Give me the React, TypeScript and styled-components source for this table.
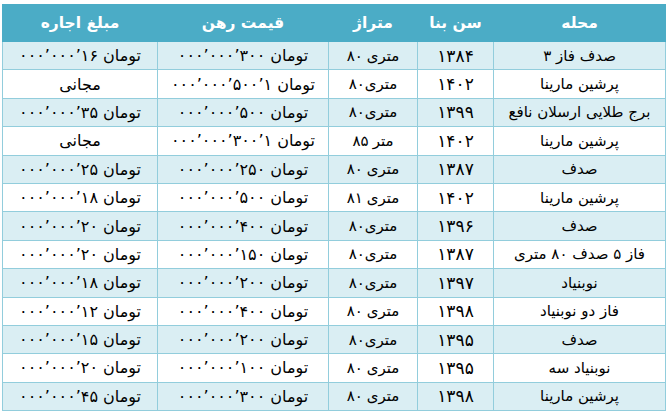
import styled, { createGlobalStyle } from "styled-components";

const GlobalStyle = createGlobalStyle`
  html, body {
    margin: 0;
    padding: 0;
    background: #ffffff;
  }
  body {
    font-family: "DejaVu Sans", "Noto Sans", sans-serif;
  }
`;

interface Listing {
  area: string;
  year: string;
  meters: string;
  spaced: boolean;
  unit: string;
  deposit: string[] | null;
  rent: string[] | null;
}

const listings: Listing[] = [
  { area: "صدف فاز ۳", year: "۱۳۸۴", meters: "۸۰", spaced: true, unit: "متری", deposit: ["۳۰۰", "۰۰۰", "۰۰۰"], rent: ["۱۶", "۰۰۰", "۰۰۰"] },
  { area: "پرشین مارینا", year: "۱۴۰۲", meters: "۸۰", spaced: false, unit: "متری", deposit: ["۱", "۵۰۰", "۰۰۰", "۰۰۰"], rent: null },
  { area: "برج طلایی ارسلان نافع", year: "۱۳۹۹", meters: "۸۰", spaced: false, unit: "متری", deposit: ["۵۰۰", "۰۰۰", "۰۰۰"], rent: ["۳۵", "۰۰۰", "۰۰۰"] },
  { area: "پرشین مارینا", year: "۱۴۰۲", meters: "۸۵", spaced: true, unit: "متر", deposit: ["۱", "۳۰۰", "۰۰۰", "۰۰۰"], rent: null },
  { area: "صدف", year: "۱۳۸۷", meters: "۸۰", spaced: true, unit: "متری", deposit: ["۲۵۰", "۰۰۰", "۰۰۰"], rent: ["۲۵", "۰۰۰", "۰۰۰"] },
  { area: "پرشین مارینا", year: "۱۴۰۲", meters: "۸۱", spaced: true, unit: "متری", deposit: ["۵۰۰", "۰۰۰", "۰۰۰"], rent: ["۱۸", "۰۰۰", "۰۰۰"] },
  { area: "صدف", year: "۱۳۹۶", meters: "۸۰", spaced: false, unit: "متری", deposit: ["۴۰۰", "۰۰۰", "۰۰۰"], rent: ["۲۰", "۰۰۰", "۰۰۰"] },
  { area: "فاز ۵ صدف ۸۰ متری", year: "۱۳۸۷", meters: "۸۰", spaced: false, unit: "متری", deposit: ["۱۵۰", "۰۰۰", "۰۰۰"], rent: ["۲۰", "۰۰۰", "۰۰۰"] },
  { area: "نوبنیاد", year: "۱۳۹۷", meters: "۸۰", spaced: false, unit: "متری", deposit: ["۲۰۰", "۰۰۰", "۰۰۰"], rent: ["۱۸", "۰۰۰", "۰۰۰"] },
  { area: "فاز دو نوبنیاد", year: "۱۳۹۸", meters: "۸۰", spaced: true, unit: "متری", deposit: ["۴۰۰", "۰۰۰", "۰۰۰"], rent: ["۱۲", "۰۰۰", "۰۰۰"] },
  { area: "صدف", year: "۱۳۹۵", meters: "۸۰", spaced: false, unit: "متری", deposit: ["۲۰۰", "۰۰۰", "۰۰۰"], rent: ["۱۵", "۰۰۰", "۰۰۰"] },
  { area: "نوبنیاد سه", year: "۱۳۹۵", meters: "۸۰", spaced: true, unit: "متری", deposit: ["۱۰۰", "۰۰۰", "۰۰۰"], rent: ["۲۰", "۰۰۰", "۰۰۰"] },
  { area: "پرشین مارینا", year: "۱۳۹۸", meters: "۸۰", spaced: true, unit: "متری", deposit: ["۳۰۰", "۰۰۰", "۰۰۰"], rent: ["۴۵", "۰۰۰", "۰۰۰"] },
];

const Page = styled.div`
  padding: 4px 2px 0 2px;
`;

const Table = styled.table`
  direction: rtl;
  width: 663px;
  table-layout: fixed;
  border-collapse: collapse;
  color: #000;
`;

const HeadCell = styled.th`
  height: 36px;
  padding: 0;
  background: #4bacc6;
  color: #ffffff;
  font-size: 15.5px;
  font-weight: bold;
  text-align: center;
  border: 1px solid #4bacc6;
`;

const Row = styled.tr<{ $striped: boolean }>`
  height: 28.4px;
  background: ${(p) => (p.$striped ? "#daeef3" : "#ffffff")};
`;

const Cell = styled.td<{ $size?: number }>`
  padding: 0;
  text-align: center;
  direction: rtl;
  font-size: ${(p) => p.$size ?? 15}px;
  border: 1px solid #92cddc;
`;

// words laid out left to right in the order they are seen in the sheet
const Visual = styled.span<{ $gap: number }>`
  display: inline-flex;
  direction: ltr;
  align-items: baseline;
  gap: ${(p) => p.$gap}px;
`;

const Digits = styled.span`
  direction: ltr;
  unicode-bidi: bidi-override;
`;

const Word = styled.span`
  direction: rtl;
`;

const widths = [172, 76, 89, 171, 155];
const headers = ["محله", "سن بنا", "متراژ", "قیمت رهن", "مبلغ اجاره"];

function Amount({ groups }: { groups: string[] | null }) {
  if (!groups) return <Word>مجانی</Word>;
  return (
    <Visual $gap={5}>
      <Digits>{[...groups].reverse().join("’")}</Digits>
      <Word>تومان</Word>
    </Visual>
  );
}

export default function App() {
  return (
    <Page>
      <GlobalStyle />
      <Table>
        <colgroup>
          {widths.map((w, i) => (
            <col key={i} style={{ width: w }} />
          ))}
        </colgroup>
        <thead>
          <tr>
            {headers.map((h) => (
              <HeadCell key={h}>{h}</HeadCell>
            ))}
          </tr>
        </thead>
        <tbody>
          {listings.map((l, i) => (
            <Row key={i} $striped={i % 2 === 0}>
              <Cell $size={15}>{l.area}</Cell>
              <Cell $size={17}>{l.year}</Cell>
              <Cell>
                <Visual $gap={l.spaced ? 4 : 0}>
                  <Digits>{l.meters}</Digits>
                  <Word>{l.unit}</Word>
                </Visual>
              </Cell>
              <Cell $size={16}>
                <Amount groups={l.deposit} />
              </Cell>
              <Cell $size={16}>
                <Amount groups={l.rent} />
              </Cell>
            </Row>
          ))}
        </tbody>
      </Table>
    </Page>
  );
}
